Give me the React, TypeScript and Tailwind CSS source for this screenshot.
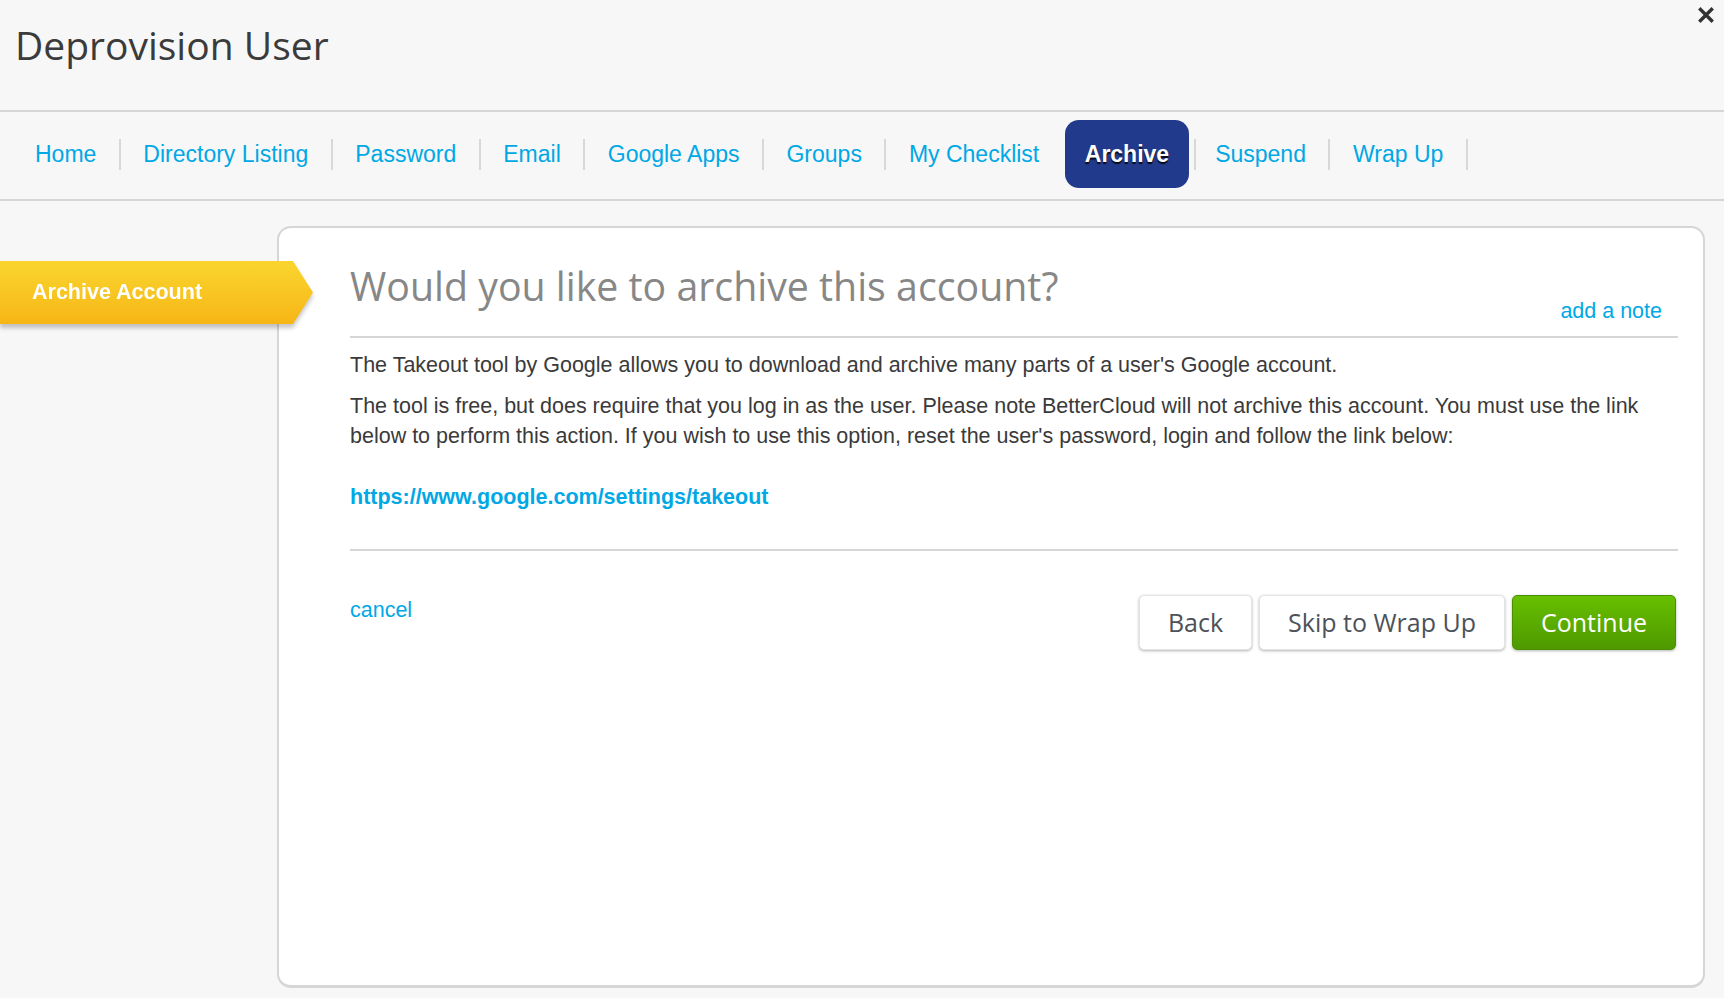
import React from 'react';

const navItems = [
  'Home',
  'Directory Listing',
  'Password',
  'Email',
  'Google Apps',
  'Groups',
  'My Checklist',
  'Archive',
  'Suspend',
  'Wrap Up',
];

const ACTIVE = 'Archive';

function CloseIcon() {
  return (
    <svg width="16" height="16" viewBox="0 0 16 16" className="text-[#333]">
      <path d="M2.5 2.5 L13.5 13.5 M13.5 2.5 L2.5 13.5" stroke="currentColor" strokeWidth="3.4" strokeLinecap="square" />
    </svg>
  );
}

function Nav() {
  return (
    <nav className="flex h-[89px] items-center border-b-2 border-[#d6d6d6] pb-[3px] pl-[12.5px] font-['Liberation_Sans',Arial,sans-serif] text-[23px]">
      {navItems.map((item, i) => {
        const active = item === ACTIVE;
        const nextActive = navItems[i + 1] === ACTIVE;
        const afterActive = navItems[i - 1] === ACTIVE;

        if (active) {
          return (
            <div key={item} className="flex items-center">
              <span className="ml-[3px] flex h-[68px] items-center rounded-[14px] bg-[#223a8c] px-[20px] font-bold text-white [text-shadow:0_2px_1px_rgba(0,0,0,0.85)]">
                {item}
              </span>
              <span className="ml-[5px] h-[31px] w-[2px] bg-[#d8d8d8]" />
            </div>
          );
        }

        return (
          <div key={item} className="flex items-center">
            <a href="#" className={afterActive ? 'pl-[19px] pr-[22.5px] text-[#00a8e5]' : 'px-[22.5px] text-[#00a8e5]'}>
              {item}
            </a>
            {!nextActive && <span className="h-[31px] w-[2px] bg-[#d8d8d8]" />}
          </div>
        );
      })}
    </nav>
  );
}

export default function App() {
  return (
    <div className="relative min-h-[998px] w-full bg-[#f7f7f7] text-[#3a3a3a]">
      {/* Close */}
      <button className="absolute right-[10px] top-[7px]" title="Close">
        <CloseIcon />
      </button>

      {/* Header */}
      <header className="h-[112px] border-b-2 border-[#d6d6d6] pl-[15px] pt-[18px]">
        <h1 className="font-['Open_Sans',sans-serif] text-[39px] leading-[54px] text-[#3b3b3b]">Deprovision User</h1>
      </header>

      <Nav />

      <div className="mt-[25px] flex pr-[19px]">
        {/* Sidebar step */}
        <aside className="w-[277px] shrink-0 pt-[35px]">
          <div className="relative z-10 w-[313px] drop-shadow-[0_4px_2px_rgba(0,0,0,0.22)]">
            <div className="flex h-[63px] items-center bg-gradient-to-b from-[#fad52d] to-[#f6b615] pl-[32px] font-['Liberation_Sans',Arial,sans-serif] text-[21.5px] font-bold text-white [clip-path:polygon(0_0,293px_0,313px_50%,293px_100%,0_100%)]">
              Archive Account
            </div>
          </div>
        </aside>

        {/* Card */}
        <section className="h-[762px] flex-1 rounded-[14px] border-2 border-b-[3px] border-[#d6d6d6] bg-white pl-[71px] pr-[25px] pt-[31px]">
          <div className="flex justify-between border-b-2 border-[#d6d6d6] pb-[13px]">
            <h2 className="font-['Open_Sans',sans-serif] text-[39.3px] leading-[54px] text-[#878787]">
              Would you like to archive this account?
            </h2>
            <a href="#" className="mr-[16px] mt-[40px] font-['Liberation_Sans',Arial,sans-serif] text-[21.5px] leading-[24px] text-[#00a8e5]">
              add a note
            </a>
          </div>

          <div className="border-b-2 border-[#d6d6d6] pb-[37px] font-['Liberation_Sans',Arial,sans-serif] text-[21.5px] leading-[30px] text-[#3a3a3a]">
            <p className="mt-[12px]">
              The Takeout tool by Google allows you to download and archive many parts of a user's Google account.
            </p>
            <p className="mt-[11px]">
              The tool is free, but does require that you log in as the user. Please note BetterCloud will not archive this account. You must use the link
              <br />
              below to perform this action. If you wish to use this option, reset the user's password, login and follow the link below:
            </p>
            <a href="#" className="mt-[31px] block font-bold text-[#00a8e5]">
              https://www.google.com/settings/takeout
            </a>
          </div>

          <div className="mt-[44px] flex items-start justify-between pr-[2px]">
            <a href="#" className="font-['Liberation_Sans',Arial,sans-serif] text-[21.5px] leading-[30px] text-[#00a8e5]">
              cancel
            </a>
            <div className="flex gap-[7px] font-['Open_Sans',sans-serif] text-[25px]">
              <button className="h-[55px] rounded-[5px] border border-[#e4e4e4] bg-white px-[28px] text-[#4d5259] shadow-[0_1px_3px_rgba(0,0,0,0.3)]">
                Back
              </button>
              <button className="h-[55px] rounded-[5px] border border-[#e4e4e4] bg-white px-[28px] text-[#4d5259] shadow-[0_1px_3px_rgba(0,0,0,0.3)]">
                Skip to Wrap Up
              </button>
              <button className="h-[55px] rounded-[5px] border border-[#4b8f00] bg-gradient-to-b from-[#67c000] to-[#4e9900] px-[28px] text-white shadow-[0_1px_3px_rgba(0,0,0,0.3)]">
                Continue
              </button>
            </div>
          </div>
        </section>
      </div>
    </div>
  );
}
